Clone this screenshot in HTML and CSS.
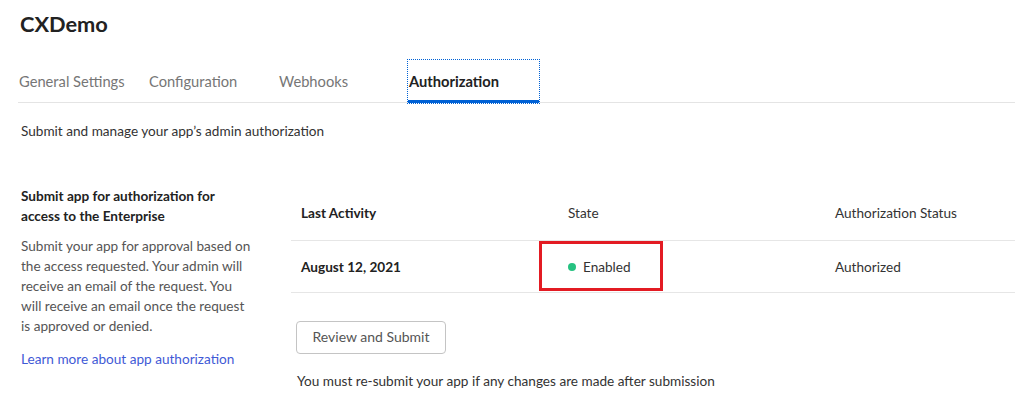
FILE: index.html
```html
<!DOCTYPE html>
<html lang="en">
<head>
<meta charset="utf-8">
<title>CXDemo</title>
<link rel="stylesheet" href="styles.css">
</head>
<body>
<div class="page">
  <h1 class="title">CXDemo</h1>
  <nav class="tabs">
    <div class="tab">General Settings</div>
    <div class="tab">Configuration</div>
    <div class="tab">Webhooks</div>
    <div class="tab active">Authorization</div>
  </nav>
  <p class="subtitle">Submit and manage your app’s admin authorization</p>
  <section class="section">
    <div class="aside">
      <h2 class="aside-title">Submit app for authorization for access to the Enterprise</h2>
      <p class="aside-text">Submit your app for approval based on the access requested. Your admin will receive an email of the request. You will receive an email once the request is approved or denied.</p>
      <a class="aside-link" href="#">Learn more about app authorization</a>
    </div>
    <div class="main">
      <div class="table">
        <div class="row head">
          <div class="cell bold">Last Activity</div>
          <div class="cell">State</div>
          <div class="cell">Authorization Status</div>
        </div>
        <div class="row body">
          <div class="cell bold">August 12, 2021</div>
          <div class="cell state"><span class="dot"></span>Enabled<span class="highlight"></span></div>
          <div class="cell">Authorized</div>
        </div>
      </div>
      <button class="btn">Review and Submit</button>
      <p class="note">You must re-submit your app if any changes are made after submission</p>
    </div>
  </section>
</div>
</body>
</html>
```

FILE: styles.css
```css
html, body {
  margin: 0;
  padding: 0;
  background: #fff;
  overflow: hidden;
}
body {
  font-family: Lato, "Open Sans", Arial, sans-serif;
  color: #222;
  font-size: 13.6px;
}
.page {
  padding-left: 19px;
}
.title {
  margin: 10px 0 0 1px;
  font-size: 21.8px;
  line-height: 28px;
  font-weight: 700;
  color: #222;
}
.tabs {
  display: flex;
  margin-top: 22px;
  border-bottom: 1px solid #e4e4e4;
  margin-left: -1px;
}
.tab {
  box-sizing: border-box;
  width: 130px;
  height: 42px;
  padding-left: 1px;
  display: flex;
  align-items: center;
  font-size: 14.7px;
  color: #767676;
}
.tab.active {
  width: 131px;
  color: #222;
  font-weight: 700;
  border-bottom: 3px solid #0061d5;
  padding-top: 2px;
  margin-bottom: -1px;
  height: 43px;
  outline: 1px dotted #0061d5;
  outline-offset: 0;
}
.subtitle {
  margin: 18px 0 0 2px;
  line-height: 20px;
  color: #333;
}
.section {
  display: flex;
  margin-top: 45px;
}
.aside {
  width: 272px;
  flex: none;
  padding-left: 2px;
  box-sizing: border-box;
}
.aside-title {
  margin: 0;
  width: 232px;
  font-size: 13.6px;
  line-height: 20px;
  font-weight: 700;
  color: #222;
}
.aside-text {
  margin: 10px 0 0;
  width: 232px;
  line-height: 20px;
  color: #555;
}
.aside-link {
  display: block;
  margin-top: 13px;
  line-height: 20px;
  color: #3f5ad6;
  text-decoration: none;
}
.main {
  flex: 1;
  min-width: 0;
}
.row {
  display: grid;
  grid-template-columns: 267px 267px 1fr;
  border-bottom: 1px solid #e6e6e6;
}
.row.head {
  height: 54px;
}
.row.body {
  height: 51px;
}
.cell {
  box-sizing: border-box;
  padding-left: 10px;
  display: flex;
  align-items: center;
  color: #333;
}
.bold {
  font-weight: 700;
  color: #222;
}
.state {
  position: relative;
}
.dot {
  width: 8px;
  height: 8px;
  border-radius: 50%;
  background: #26c281;
  margin-right: 7px;
}
.highlight {
  position: absolute;
  left: -19px;
  top: 0;
  width: 124px;
  height: 50px;
  box-sizing: border-box;
  border: 3px solid #e31b23;
}
.btn {
  display: block;
  margin: 28px 0 0 5px;
  height: 33px;
  width: 150px;
  box-sizing: border-box;
  background: #fff;
  border: 1px solid #c4c4c4;
  border-radius: 4px;
  font-family: inherit;
  font-size: 14px;
  color: #555;
  padding: 0 0 2px;
}
.note {
  margin: 17px 0 0 6px;
  line-height: 20px;
  color: #333;
}
```
